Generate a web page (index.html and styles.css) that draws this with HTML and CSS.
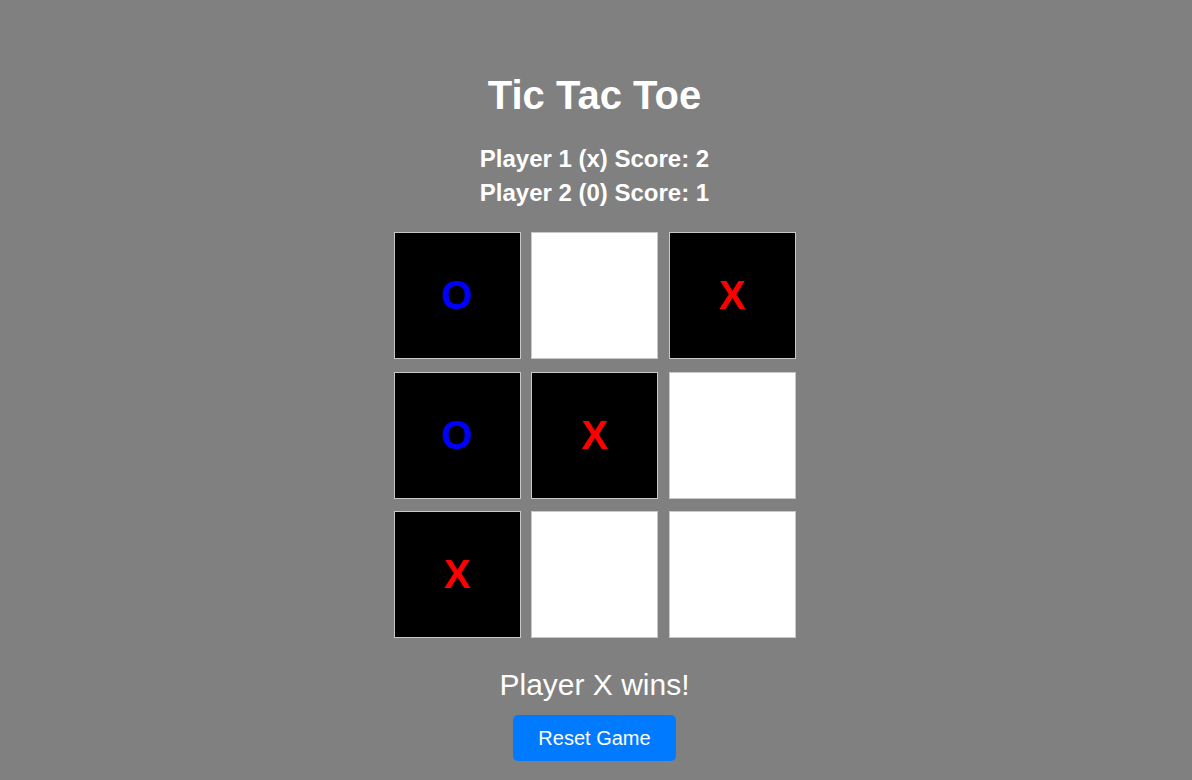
FILE: index.html
```html
<!DOCTYPE html>
<html>
<head>
<meta charset="utf-8">
<link rel="stylesheet" href="styles.css">
</head>
<body>
<div class="app">
  <h1 class="title">Tic Tac Toe</h1>
  <div class="scores">
    <div class="score">Player 1 (x) Score: 2</div>
    <div class="score">Player 2 (0) Score: 1</div>
  </div>
  <div class="board">
    <div class="cell filled o">O</div>
    <div class="cell"></div>
    <div class="cell filled x">X</div>
    <div class="cell filled o">O</div>
    <div class="cell filled x">X</div>
    <div class="cell"></div>
    <div class="cell filled x">X</div>
    <div class="cell"></div>
    <div class="cell"></div>
  </div>
  <div class="status">Player X wins!</div>
  <button class="reset">Reset Game</button>
</div>
</body>
</html>
```
FILE: styles.css
```css
html, body {
  margin: 0;
  padding: 0;
  background: #808080;
  font-family: "Liberation Sans", Arial, sans-serif;
  color: #fff;
}
.app {
  display: flex;
  flex-direction: column;
  align-items: center;
  padding-right: 3px;
}
.title {
  margin: 72px 0 0 0;
  font-size: 40px;
  line-height: 46px;
  font-weight: bold;
}
.scores {
  margin-top: 24px;
  display: flex;
  flex-direction: column;
  align-items: center;
}
.score {
  font-size: 24px;
  font-weight: bold;
  line-height: 34px;
}
.board {
  margin-top: 22px;
  display: grid;
  grid-template-columns: repeat(3, 127px);
  grid-auto-rows: 127px;
  column-gap: 10.5px;
  row-gap: 12.5px;
}
.cell {
  box-sizing: border-box;
  border: 1px solid #c8c8c8;
  background: #fff;
  display: flex;
  align-items: center;
  justify-content: center;
  font-size: 40px;
  font-weight: bold;
}
.cell.filled { background: #000; }
.cell.x { color: #ff0000; }
.cell.o { color: #0000ff; }
.status {
  margin-top: 30px;
  font-size: 30px;
  line-height: 34px;
}
.reset {
  margin-top: 13px;
  width: 163px;
  height: 46px;
  border: none;
  border-radius: 5px;
  background: #007bff;
  color: #fff;
  font-family: "Liberation Sans", Arial, sans-serif;
  font-size: 20px;
  padding: 0;
}
```
